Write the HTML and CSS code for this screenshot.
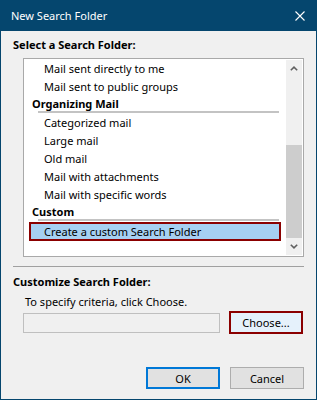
FILE: index.html
```html
<!DOCTYPE html>
<html lang="en">
<head>
	<meta charset="UTF-8" />
	<title>New Search Folder</title>
	<link rel="stylesheet" href="styles.css">
</head>
<body>
	<!-- Dialog -->
	<main class="dialog">
		<header class="titlebar">
			<span class="title">New Search Folder</span>
			<svg class="close" width="10" height="10" viewBox="0 0 10 10">
				<path d="M0.5 0.5 L9.5 9.5 M9.5 0.5 L0.5 9.5" stroke="#fff" stroke-width="1.1" fill="none" />
			</svg>
		</header>

		<h3 class="label first">Select a Search Folder:</h3>

		<!-- Folder list -->
		<section class="listbox">
			<div class="items">
				<div class="item">Mail sent directly to me</div>
				<div class="item">Mail sent to public groups</div>
				<div class="group">Organizing Mail</div>
				<div class="item">Categorized mail</div>
				<div class="item">Large mail</div>
				<div class="item">Old mail</div>
				<div class="item">Mail with attachments</div>
				<div class="item">Mail with specific words</div>
				<div class="group">Custom</div>
				<div class="item selected">Create a custom Search Folder</div>
			</div>
			<div class="scrollbar">
				<div class="arrow">
					<svg width="8" height="5" viewBox="0 0 8 5"><path d="M0.8 4.3 L4 1.2 L7.2 4.3" stroke="#606060" stroke-width="1.6" fill="none" /></svg>
				</div>
				<div class="track"><div class="thumb"></div></div>
				<div class="arrow">
					<svg width="8" height="5" viewBox="0 0 8 5"><path d="M0.8 0.7 L4 3.8 L7.2 0.7" stroke="#606060" stroke-width="1.6" fill="none" /></svg>
				</div>
			</div>
		</section>

		<hr class="divider" />

		<!-- Customize -->
		<h3 class="label">Customize Search Folder:</h3>
		<p class="hint">To specify criteria, click Choose.</p>
		<div class="criteria">
			<input type="text" class="criteria-box" disabled />
			<button class="btn choose">Choose...</button>
		</div>

		<footer class="actions">
			<button class="btn ok">OK</button>
			<button class="btn">Cancel</button>
		</footer>
	</main>
</body>
</html>
```

FILE: styles.css
```css
/* Variables */
:root {
	--frame: #05466e;
	--face: #f0f0f0;
	--button: #e1e1e1;
	--highlight: #8b0000;
	--select: #a6d0f2;
}

* {
	margin: 0;
	padding: 0;
	box-sizing: border-box;
	font-family: "Noto Sans", "Open Sans", sans-serif;
}

body {
	background: #fff;
	color: #000;
	font-size: 11px;
}

.dialog {
	display: flex;
	flex-direction: column;
	width: 317px;
	height: 400px;
	background: var(--face);
	border: 1px solid var(--frame);
}

.titlebar {
	display: flex;
	align-items: center;
	justify-content: space-between;
	height: 31px;
	margin: -1px -1px 0;
	padding: 0 12px 0 11px;
	background: var(--frame);
	color: #fff;
}

.titlebar .title {
	font-size: 11px;
	line-height: 16px;
	padding-top: 1px;
}

.label {
	font-size: 11px;
	font-weight: 700;
	line-height: 16px;
	margin-left: 12px;
}

.label.first {
	margin-top: 6px;
}

/* List */
.listbox {
	display: flex;
	width: 281px;
	height: 199px;
	margin: 5px 0 0 22px;
	padding: 1px;
	background: #fff;
	border: 1px solid #a9a9a9;
}

.items {
	flex: 1 1 0%;
	overflow: hidden;
}

.item {
	height: 18px;
	line-height: 18px;
	padding-left: 19px;
	white-space: nowrap;
}

.group {
	height: 18px;
	line-height: 15px;
	padding-left: 7px;
	font-weight: 700;
	position: relative;
}

.group::after {
	content: '';
	display: block;
	height: 2px;
	margin: 0 7px 0 6px;
	background: #c3c3c3;
}

.item.selected {
	height: 19px;
	line-height: 15px;
	margin: 0 5px 0 4px;
	padding-left: 13px;
	background: var(--select);
	border: 2px solid var(--highlight);
}

.scrollbar {
	display: flex;
	flex-direction: column;
	width: 16px;
	background: var(--face);
}

.arrow {
	display: flex;
	align-items: center;
	justify-content: center;
	height: 17px;
}

.track {
	display: flex;
	flex: 1 1 0%;
	padding-top: 68px;
}

.thumb {
	flex: 1 1 0%;
	background: #cdcdcd;
}

.divider {
	height: 1px;
	margin: 9px 12px 0 12px;
	border: 0;
	background: #a0a0a0;
}

.divider + .label {
	margin-top: 7px;
}

.hint {
	line-height: 16px;
	margin: 4px 0 0 24px;
}

.criteria {
	display: flex;
	align-items: center;
	gap: 9px;
	margin: 1px 0 0 22px;
}

.criteria-box {
	appearance: none;
	width: 197px;
	height: 20px;
	background: var(--face);
	border: 1px solid #bfbfbf;
	outline: none;
}

.btn {
	appearance: none;
	width: 74px;
	height: 22px;
	font-size: 11px;
	color: #000;
	background: var(--button);
	border: 1px solid #adadad;
}

.btn.choose {
	height: 23px;
	background: #e5f1fb;
	border: 2px solid var(--highlight);
}

.actions {
	display: flex;
	justify-content: flex-end;
	gap: 10px;
	margin-top: 33px;
	padding-right: 12px;
}

.btn.ok {
	border: 2px solid #0078d7;
}
```
